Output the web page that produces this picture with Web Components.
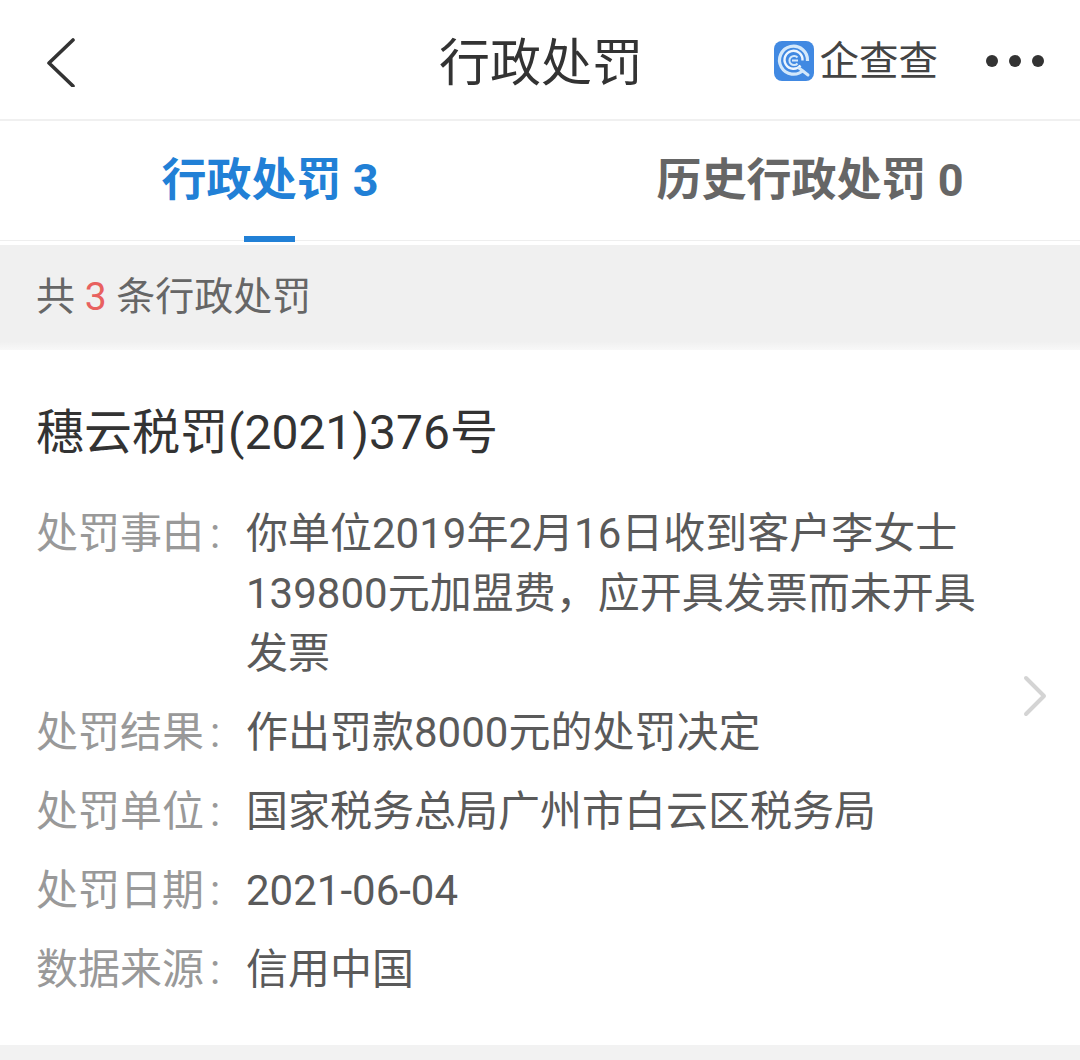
<!DOCTYPE html>
<html lang="zh-CN">
<head>
<meta charset="utf-8">
<title>行政处罚</title>
<style>
    html, body {
        margin: 0;
        background: #f2f2f2;
    }
    body {
        width: 1080px;
        height: 1060px;
        overflow: hidden;
        font-family: Roboto, "Noto Sans CJK SC", sans-serif;
    }
</style>
</head>
<body>
<app-header>行政处罚</app-header>
<tab-bar>
    <tab-item active>行政处罚 3</tab-item>
    <tab-item>历史行政处罚 0</tab-item>
</tab-bar>
<count-bar>共 <b>3</b> 条行政处罚</count-bar>
<penalty-card heading="穗云税罚(2021)376号">
    <penalty-row label="处罚事由">你单位2019年2月16日收到客户李女士139800元加盟费，应开具发票而未开具发票</penalty-row>
    <penalty-row label="处罚结果">作出罚款8000元的处罚决定</penalty-row>
    <penalty-row label="处罚单位">国家税务总局广州市白云区税务局</penalty-row>
    <penalty-row label="处罚日期">2021-06-04</penalty-row>
    <penalty-row label="数据来源">信用中国</penalty-row>
</penalty-card>
<script>
const headerTemplate = document.createElement('template');
headerTemplate.innerHTML = `
<style>
    :host {
        display: grid;
        grid-template-columns: 393px auto 1fr;
        align-items: center;
        height: 121px;
        box-sizing: border-box;
        padding: 2px 36px 0 46px;
        border-bottom: 2px solid #f0f0f0;
        background: #fff;
        color: #333;
    }
    .back {
        margin-top: 2px;
    }
    .title {
        margin-top: 6px;
        font-size: 51px;
        line-height: 60px;
        color: #333;
    }
    .right {
        display: flex;
        align-items: center;
        justify-content: flex-end;
    }
    .logo {
        font-size: 39.5px;
        font-weight: 400;
        color: #444;
        margin-left: 6px;
        margin-top: 2px;
        line-height: 44px;
    }
    svg {
        display: block;
    }
    .dots {
        margin-left: 48px;
    }
</style>
<svg class="back" width="32" height="50" viewBox="0 0 32 50">
    <path d="M27 3 L3 26 L27 49" fill="none" stroke="#333" stroke-width="3.6" stroke-linecap="round" stroke-linejoin="round"/>
</svg>
<div class="title"><slot></slot></div>
<div class="right">
    <svg width="40" height="40" viewBox="0 0 40 40">
        <rect width="40" height="40" rx="8" fill="#4189e2"/>
        <path d="M29.5 29 A14 14 0 1 1 33.5 20" fill="none" stroke="#d3e8fb" stroke-width="3.2"/>
        <path d="M26.5 24.5 A9 9 0 1 1 28.5 19.5" fill="none" stroke="#eef6fe" stroke-width="2.4"/>
        <path d="M23.5 22.5 A4.6 4.6 0 1 1 23.5 16.5 M18 19.5 H24" fill="none" stroke="#d3e8fb" stroke-width="2"/>
        <path d="M25 27 L34 34" fill="none" stroke="#d3e8fb" stroke-width="3" stroke-linecap="round"/>
    </svg>
    <span class="logo">企查查</span>
    <svg class="dots" width="58" height="12" viewBox="0 0 58 12">
        <circle cx="6" cy="6" r="6" fill="#333"/>
        <circle cx="29" cy="6" r="6" fill="#333"/>
        <circle cx="52" cy="6" r="6" fill="#333"/>
    </svg>
</div>
`;

class AppHeader extends HTMLElement {
    constructor() {
        super();
        this.attachShadow({ mode: 'open' }).appendChild(headerTemplate.content.cloneNode(true));
    }
}
customElements.define('app-header', AppHeader);

const tabBarTemplate = document.createElement('template');
tabBarTemplate.innerHTML = `
<style>
    :host {
        display: grid;
        grid-template-columns: 1fr 1fr;
        height: 120px;
        box-sizing: border-box;
        border-bottom: 1px solid #eee;
        background: #fff;
    }
</style>
<slot></slot>
`;

class TabBar extends HTMLElement {
    constructor() {
        super();
        this.attachShadow({ mode: 'open' }).appendChild(tabBarTemplate.content.cloneNode(true));
    }
}
customElements.define('tab-bar', TabBar);

const tabItemTemplate = document.createElement('template');
tabItemTemplate.innerHTML = `
<style>
    :host {
        display: flex;
        justify-content: center;
        position: relative;
        font-size: 45px;
        font-weight: 700;
        line-height: 120px;
        color: #666;
    }
    :host([active]) {
        color: #2180d6;
    }
    :host([active])::after {
        content: "";
        position: absolute;
        left: 244px;
        bottom: -1px;
        width: 51px;
        height: 6px;
        background: #2180d6;
    }
</style>
<slot></slot>
`;

class TabItem extends HTMLElement {
    constructor() {
        super();
        this.attachShadow({ mode: 'open' }).appendChild(tabItemTemplate.content.cloneNode(true));
    }
}
customElements.define('tab-item', TabItem);

const countBarTemplate = document.createElement('template');
countBarTemplate.innerHTML = `
<style>
    :host {
        display: block;
        height: 109px;
        box-sizing: border-box;
        border-top: 4px solid #fff;
        padding-left: 36px;
        background: linear-gradient(#f0f0f0 92%, #f8f8f8);
        font-size: 39px;
        line-height: 105px;
        color: #666;
    }
    ::slotted(b) {
        font-weight: 400;
        color: #e8615f;
    }
</style>
<slot></slot>
`;

class CountBar extends HTMLElement {
    constructor() {
        super();
        this.attachShadow({ mode: 'open' }).appendChild(countBarTemplate.content.cloneNode(true));
    }
}
customElements.define('count-bar', CountBar);

const cardTemplate = document.createElement('template');
cardTemplate.innerHTML = `
<style>
    :host {
        display: flex;
        align-items: center;
        height: 695px;
        box-sizing: border-box;
        padding: 0 33px 0 36px;
        background: #fff;
    }
    .body {
        flex: 1;
        align-self: flex-start;
        padding-top: 51px;
    }
    h2 {
        margin: 0 0 39px;
        font-size: 48px;
        font-weight: 400;
        line-height: 64px;
        color: #333;
    }
    .rows {
        display: flex;
        flex-direction: column;
        gap: 19px;
    }
    svg {
        display: block;
        flex: none;
        margin-top: -3px;
    }
</style>
<div class="body">
    <h2></h2>
    <div class="rows"><slot></slot></div>
</div>
<svg width="24" height="42" viewBox="0 0 24 42">
    <path d="M3 3 L21 21 L3 39" fill="none" stroke="#d4d4d4" stroke-width="4" stroke-linecap="round" stroke-linejoin="round"/>
</svg>
`;

class PenaltyCard extends HTMLElement {
    constructor() {
        super();
        this.attachShadow({ mode: 'open' }).appendChild(cardTemplate.content.cloneNode(true));
    }

    connectedCallback() {
        this.shadowRoot.querySelector('h2').textContent = this.getAttribute('heading');
    }
}
customElements.define('penalty-card', PenaltyCard);

const rowTemplate = document.createElement('template');
rowTemplate.innerHTML = `
<style>
    :host {
        display: grid;
        grid-template-columns: 210px 735px;
        font-size: 42px;
        line-height: 60px;
    }
    .label {
        color: #999;
    }
    .colon {
        margin-left: 6px;
    }
    .value {
        color: #5a5a5a;
    }
</style>
<div class="label"><span class="text"></span><span class="colon">:</span></div>
<div class="value"><slot></slot></div>
`;

class PenaltyRow extends HTMLElement {
    constructor() {
        super();
        this.attachShadow({ mode: 'open' }).appendChild(rowTemplate.content.cloneNode(true));
    }

    connectedCallback() {
        this.shadowRoot.querySelector('.text').textContent = this.getAttribute('label');
    }
}
customElements.define('penalty-row', PenaltyRow);
</script>
</body>
</html>
